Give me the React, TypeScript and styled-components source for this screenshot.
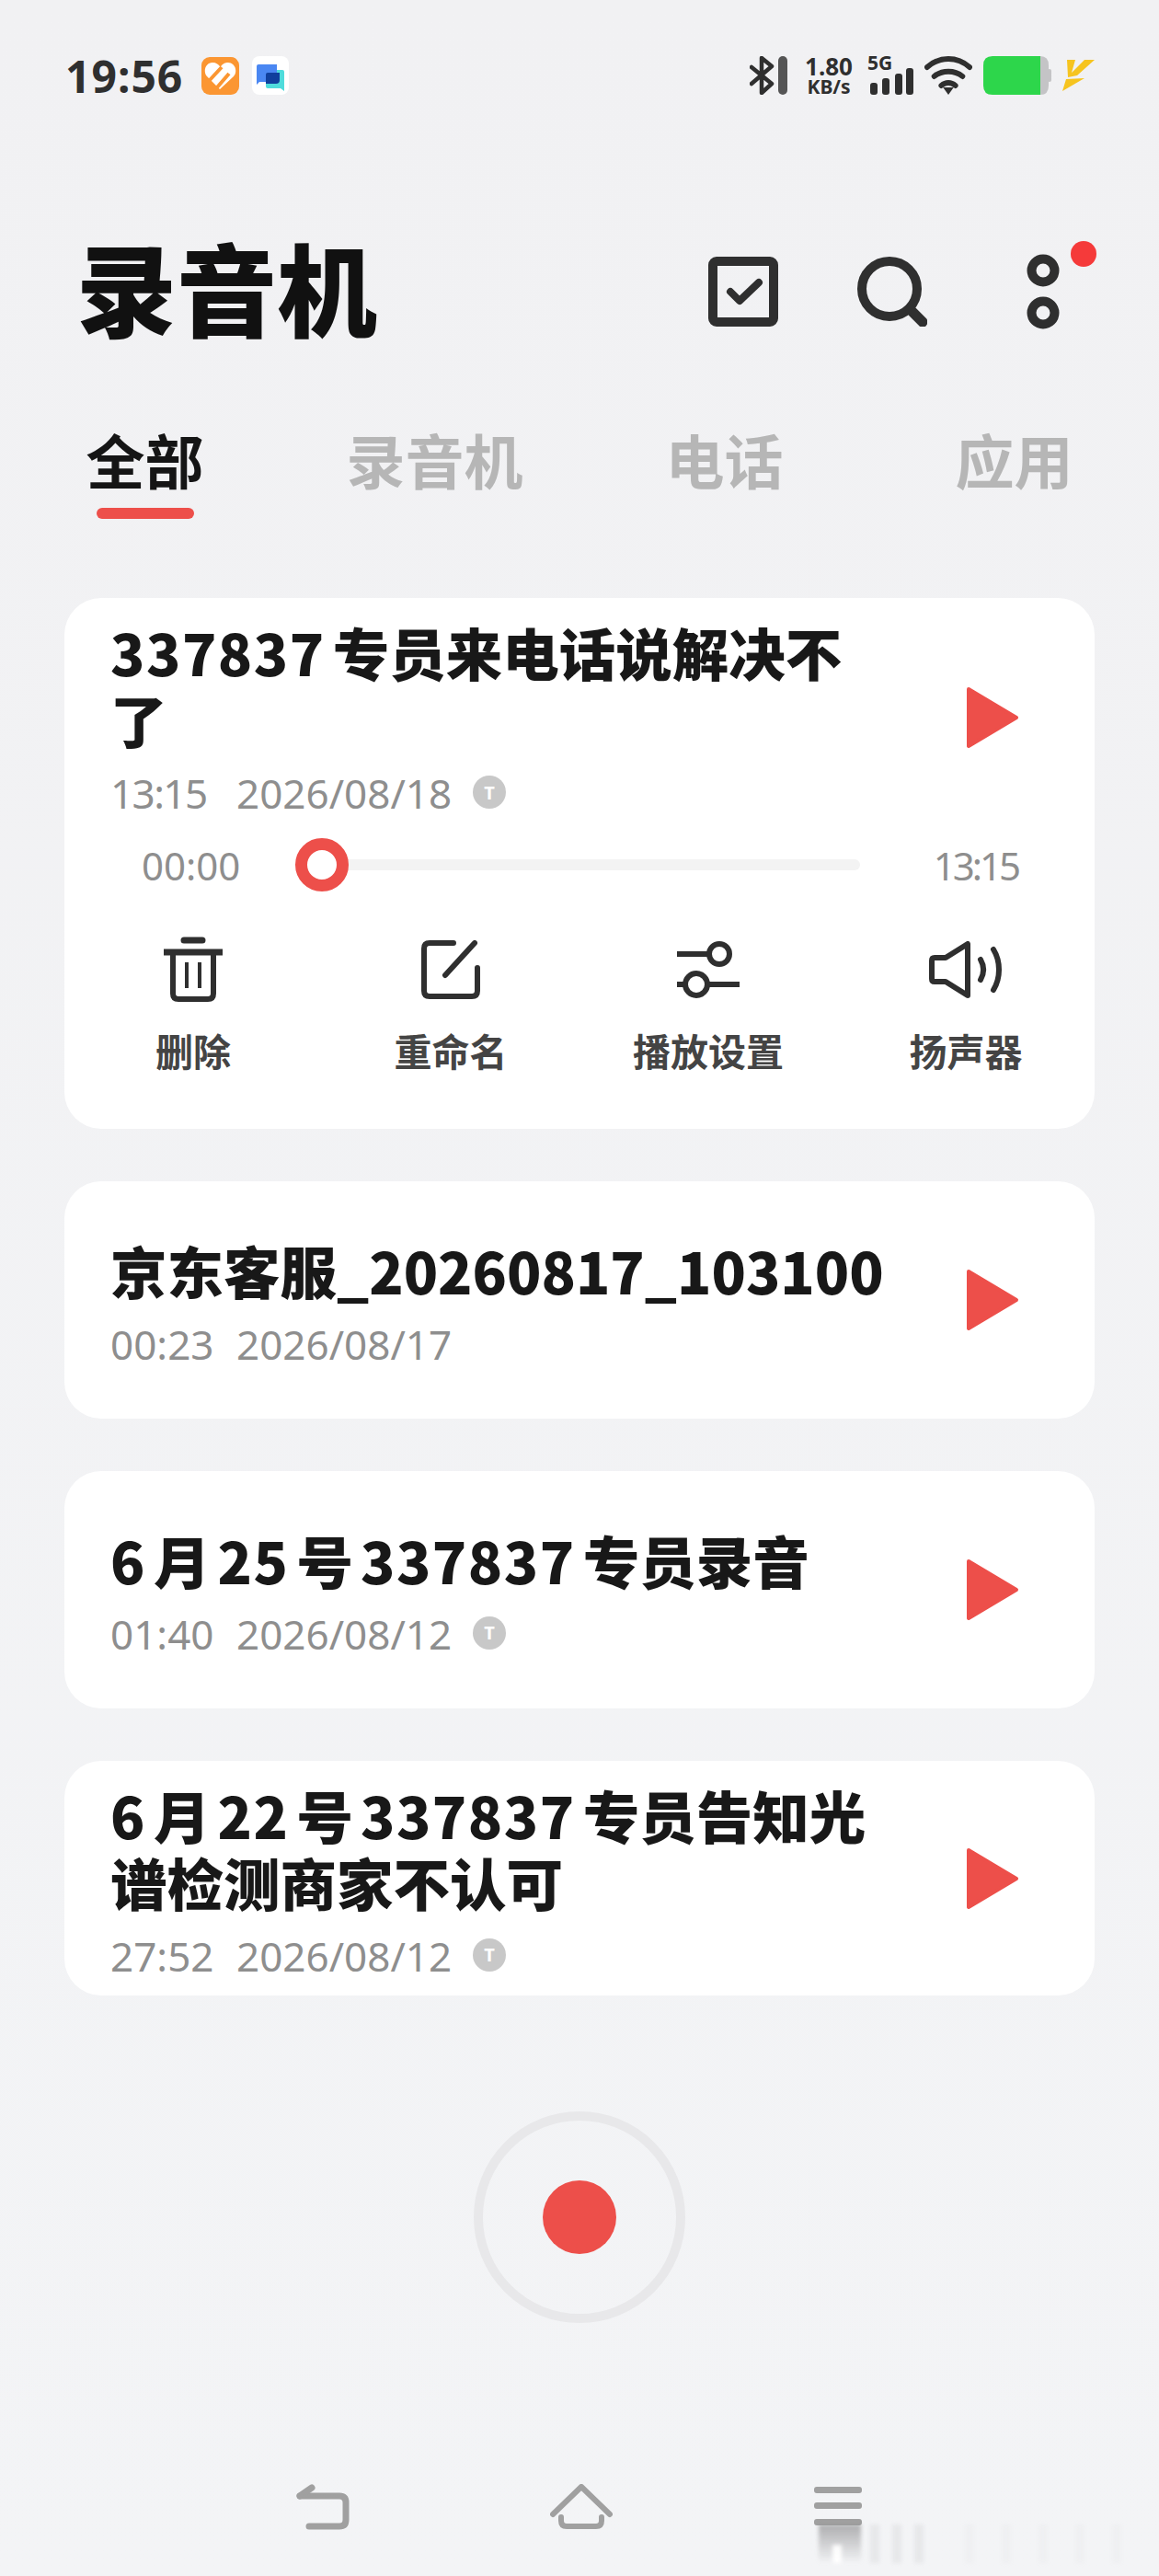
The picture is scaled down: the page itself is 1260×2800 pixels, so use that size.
import React from "react"
import styled, { createGlobalStyle } from "styled-components"

const CJK = `"Noto Sans CJK SC", "Noto Sans", sans-serif`
const LATIN = `"Noto Sans", "Noto Sans CJK SC", sans-serif`
const INK = "#2f2f2f"
const RED = "#ed4f4a"

const GlobalStyle = createGlobalStyle`
	html, body {
		margin: 0;
		padding: 0;
		background: #f1f2f4;
	}
`

const Screen = styled.div`
	position: relative;
	width: 1260px;
	height: 2800px;
	overflow: hidden;
	background: linear-gradient(#f1f1f3, #f3f4f6);
	font-family: ${CJK};
`

const StatusBar = styled.div`
	display: flex;
	align-items: center;
	justify-content: space-between;
	height: 164px;
	padding: 0 70px 0 71px;
`

const StatusGroup = styled.div`
	display: flex;
	align-items: center;
	gap: ${props => props.$gap}px;
`

const Clock = styled.span`
	font-family: ${LATIN};
	font-size: 48px;
	font-weight: 700;
	color: ${INK};
	margin-right: 6px;
	letter-spacing: 1px;
`

const Speed = styled.div`
	display: flex;
	flex-direction: column;
	align-items: center;
	font-family: ${LATIN};
	font-weight: 700;
	color: ${INK};
	margin: 0 0 0 6px;
`

const SpeedValue = styled.span`
	font-size: 26px;
	line-height: 24px;
`

const SpeedUnit = styled.span`
	font-size: 21px;
	line-height: 20px;
`

const Signal = styled.div`
	position: relative;
	width: 50px;
	height: 42px;
	margin-left: 4px;
`

const SignalLabel = styled.span`
	position: absolute;
	left: 0;
	top: -5px;
	font-family: ${LATIN};
	font-size: 21px;
	line-height: 24px;
	font-weight: 700;
	color: ${INK};
`

const Header = styled.div`
	display: flex;
	align-items: center;
	height: 108px;
	margin-top: 100px;
	padding: 0 108px 0 83px;
`

const Title = styled.h1`
	flex: 1;
	margin: -14px 0 0;
	font-size: 109px;
	line-height: 108px;
	font-weight: 900;
	color: #111;
`

const HeaderIcons = styled.div`
	position: relative;
	display: flex;
	align-items: center;
	margin-top: -2px;
	gap: 86px;
`

const Rings = styled.svg`
	margin-left: 22px;
`

const Dot = styled.span`
	position: absolute;
	right: -40px;
	top: -14px;
	width: 28px;
	height: 28px;
	border-radius: 50%;
	background: #f53a3a;
`

const Tabs = styled.div`
	display: grid;
	grid-template-columns: repeat(4, 1fr);
	margin-top: 86px;
`

const Tab = styled.div`
	position: relative;
	text-align: center;
	font-size: 64px;
	line-height: 80px;
	font-weight: 700;
	color: ${props => (props.$active ? "#151515" : "#b6b6b6")};
`

const TabBar = styled.span`
	position: absolute;
	left: 50%;
	bottom: -26px;
	width: 106px;
	height: 12px;
	margin-left: -53px;
	border-radius: 6px;
	background: ${RED};
`

const List = styled.div`
	display: flex;
	flex-direction: column;
	gap: 57px;
	margin: 112px 70px 0;
`

const Card = styled.div`
	background: #fff;
	border-radius: 40px;
	overflow: hidden;
`

const CardRow = styled.div`
	display: flex;
	align-items: center;
	justify-content: space-between;
	height: ${props => props.$height}px;
	padding: 0 82px 0 50px;
`

const Info = styled.div`
	width: 852px;
	padding-top: ${props => props.$top}px;
`

const RecordingTitle = styled.div`
	margin-top: -4px;
	font-size: 61.5px;
	line-height: 73px;
	font-weight: 900;
	color: #181818;
`

const Num = styled.span`
	letter-spacing: ${props => (props.$flush ? 0 : 1.5)}px;
	margin: 0 ${props => (props.$flush ? 0 : 8)}px;
	&:first-child {
		margin-left: 0;
	}
`

const Meta = styled.div`
	display: flex;
	align-items: center;
	height: 60px;
	margin-top: 14px;
	font-family: ${LATIN};
	font-size: 44px;
	color: #8e8e8e;
`

const MetaTime = styled.span`
	width: 137px;
	letter-spacing: ${props => (props.$tight ? -1.6 : 0)}px;
`

const Badge = styled.span`
	display: flex;
	align-items: center;
	justify-content: center;
	width: 36px;
	height: 36px;
	margin-left: 23px;
	margin-top: -2px;
	border-radius: 50%;
	background: #c8c8c8;
	color: #fff;
	font-size: 20px;
	font-weight: 700;
`

const Slider = styled.div`
	display: flex;
	align-items: center;
	height: 60px;
	padding: 0 83px 0 84px;
	font-family: ${LATIN};
	font-size: 42px;
	color: #8e8e8e;
`

const SliderTime = styled.span`
	width: 196px;
`

const Track = styled.div`
	position: relative;
	width: 585px;
	height: 12px;
	border-radius: 6px;
	background: #f3f3f3;
`

const Thumb = styled.span`
	position: absolute;
	left: -29px;
	top: -23px;
	box-sizing: border-box;
	width: 58px;
	height: 58px;
	border: 13px solid ${RED};
	border-radius: 50%;
	background: #fff;
`

const SliderEnd = styled.span`
	margin-left: auto;
	letter-spacing: -3px;
`

const Actions = styled.div`
	display: grid;
	grid-template-columns: repeat(4, 1fr);
	margin-top: 48px;
	padding-bottom: 61px;
`

const Action = styled.div`
	display: flex;
	flex-direction: column;
	align-items: center;
`

const ActionLabel = styled.span`
	font-size: 41px;
	line-height: 50px;
	font-weight: 700;
	color: #444;
`

const ActionIcon = styled.div`
	display: flex;
	align-items: center;
	justify-content: center;
	height: 72px;
	margin-bottom: 26px;
`

const RecordRing = styled.div`
	display: flex;
	align-items: center;
	justify-content: center;
	box-sizing: border-box;
	width: 230px;
	height: 230px;
	margin: 126px auto 0;
	border: 10px solid #e8e8ea;
	border-radius: 50%;
`

const RecordDot = styled.div`
	width: 80px;
	height: 80px;
	border-radius: 50%;
	background: ${RED};
`

const NavBar = styled.div`
	display: flex;
	align-items: center;
	justify-content: center;
	gap: 218px;
	margin-top: 175px;
`

// the faint smear under the menu button
const Smudge = styled.div`
	position: absolute;
	left: 890px;
	top: 2744px;
	width: 350px;
	height: 42px;
	filter: blur(2px);
	background:
		linear-gradient(#fbfbfb, #fff) 15px 22px / 10px 20px no-repeat,
		linear-gradient(rgba(150, 150, 152, 0.75), rgba(150, 150, 152, 0)) 0 0 / 46px 100% no-repeat,
		repeating-linear-gradient(90deg, rgba(205, 205, 207, 0.3) 0 10px, transparent 10px 24px) 56px 0 / 70px 100% no-repeat,
		repeating-linear-gradient(90deg, rgba(225, 225, 227, 0.22) 0 8px, transparent 8px 40px) 160px 0 / 190px 100% no-repeat;
`

const PlayIcon = () => (
	<svg width="58" height="68" viewBox="0 0 58 68">
		<path d="M3 3 L55 34 L3 65 Z" fill={RED} stroke={RED} strokeWidth="4" strokeLinejoin="round" />
	</svg>
)

const Recording = ({ height, top, title, time, tight, date, children }: any) => (
	<CardRow $height={height}>
		<Info $top={top}>
			<RecordingTitle>{title}</RecordingTitle>
			<Meta>
				<MetaTime $tight={tight}>{time}</MetaTime>
				{date}
				{children}
			</Meta>
		</Info>
		<PlayIcon />
	</CardRow>
)

const HealthIcon = () => (
	<svg width="41" height="41" viewBox="0 0 41 41">
		<rect width="41" height="41" rx="9" fill="#fb9632" />
		<path d="M20 35 L6 21 C1 15 5 6 12 6 C16 6 19 8 20.5 11 C23 7 26 6 29 6 C36 6 40 15 35 21 Z" fill="#fff" />
		<path d="M9 25 L22 11 M17 33 L30 18" stroke="#fb9632" strokeWidth="4" />
	</svg>
)

const ChatIcon = () => (
	<svg width="40" height="42" viewBox="0 0 40 42">
		<rect width="40" height="42" rx="8" fill="#fff" />
		<path d="M15 15 H33 Q35 15 35 17 V38 L31 35 H17 Q15 35 15 33 Z" fill="#4fdcdc" />
		<path d="M7 9 H27 V28 H8 L5 31 V11 Q5 9 7 9 Z" fill="#4a87f2" />
		<path d="M17 18 H30 V26 Q30 30 26 30 H15 V20 Q15 18 17 18 Z" fill="#103f9c" />
	</svg>
)

const App = (): JSX.Element => (
	<Screen>
		<GlobalStyle />
		<StatusBar>
			<StatusGroup $gap={14}>
				<Clock>19:56</Clock>
				<HealthIcon />
				<ChatIcon />
			</StatusGroup>
			<StatusGroup $gap={12}>
				<svg width="42" height="42" viewBox="0 0 42 42">
					<path d="M2 12 L24 30 L13 40 V2 L24 11 L2 30" fill="none" stroke={INK} strokeWidth="4.5" strokeLinejoin="round" strokeLinecap="round" />
					<rect x="31" y="0" width="10" height="42" rx="5" fill="#555" />
				</svg>
				<Speed>
					<SpeedValue>1.80</SpeedValue>
					<SpeedUnit>KB/s</SpeedUnit>
				</Speed>
				<Signal>
					<SignalLabel>5G</SignalLabel>
					<svg width="50" height="42" viewBox="0 0 50 42">
						<rect x="3" y="29" width="8" height="13" rx="3" fill={INK} />
						<rect x="16" y="24" width="8" height="18" rx="3" fill={INK} />
						<rect x="30" y="19" width="8" height="23" rx="3" fill={INK} />
						<rect x="42" y="13" width="8" height="29" rx="3" fill={INK} />
					</svg>
				</Signal>
				<svg width="52" height="42" viewBox="0 0 54 42" preserveAspectRatio="none">
					<path d="M3 12 C17 0 37 0 51 12 M11 22 C20 15 34 15 43 22 M19 32 C24 28 30 28 35 32" fill="none" stroke={INK} strokeWidth="6" strokeLinecap="round" />
					<path d="M21 34 H33 L27 42 Z" fill={INK} />
				</svg>
				<svg width="74" height="42" viewBox="0 0 74 42">
					<path d="M60 0 H62 Q71 0 71 10 V32 Q71 42 62 42 H60 Z" fill="#c4c4c6" />
					<rect x="70" y="14" width="4" height="14" rx="2" fill="#c4c4c6" />
					<path d="M10 0 H62 V42 H10 Q0 42 0 32 V10 Q0 0 10 0 Z" fill="#2dd64b" />
				</svg>
				<svg width="35" height="34" viewBox="0 0 35 34">
					<path d="M5 0 H14 L10 14 L24 0 H35 L16 17 L6 19 Z M24 20 L0 34 L4 21 Z" fill="#f6c41f" />
				</svg>
			</StatusGroup>
		</StatusBar>

		<Header>
			<Title>录音机</Title>
			<HeaderIcons>
				<svg width="76" height="76" viewBox="0 0 76 76">
					<rect x="5" y="5" width="66" height="66" rx="4" fill="none" stroke={INK} strokeWidth="10" />
					<path d="M24 38 L34 48 L55 28" fill="none" stroke={INK} strokeWidth="8" strokeLinecap="round" strokeLinejoin="round" />
				</svg>
				<svg width="76" height="76" viewBox="0 0 76 76">
					<circle cx="35" cy="35" r="30" fill="none" stroke={INK} strokeWidth="10" />
					<path d="M58 58 L71 71" stroke={INK} strokeWidth="11" strokeLinecap="round" />
				</svg>
				<Rings width="36" height="82" viewBox="0 0 36 82">
					<circle cx="18" cy="18" r="12.5" fill="none" stroke={INK} strokeWidth="10" />
					<circle cx="18" cy="64" r="12.5" fill="none" stroke={INK} strokeWidth="10" />
				</Rings>
				<Dot />
			</HeaderIcons>
		</Header>

		<Tabs>
			<Tab $active>全部<TabBar /></Tab>
			<Tab>录音机</Tab>
			<Tab>电话</Tab>
			<Tab>应用</Tab>
		</Tabs>

		<List>
			<Card>
				<Recording height={260} top={8} tight title={<><Num>337837</Num>专员来电话说解决不了</>} time="13:15" date="2026/08/18">
					<Badge>T</Badge>
				</Recording>
				<Slider>
					<SliderTime>00:00</SliderTime>
					<Track><Thumb /></Track>
					<SliderEnd>13:15</SliderEnd>
				</Slider>
				<Actions>
					<Action>
						<ActionIcon>
							<svg width="64" height="72" viewBox="0 0 64 72">
								<path d="M22 4 H42 M1 17 H63" stroke={INK} strokeWidth="7" strokeLinecap="round" />
								<path d="M10 17 V62 Q10 68 16 68 H48 Q54 68 54 62 V17" fill="none" stroke={INK} strokeWidth="6" />
								<path d="M25 28 V56 M39 28 V56" stroke={INK} strokeWidth="4" />
							</svg>
						</ActionIcon>
						<ActionLabel>删除</ActionLabel>
					</Action>
					<Action>
						<ActionIcon>
							<svg width="64" height="64" viewBox="0 0 64 64">
								<path d="M35 3 H9 Q3 3 3 9 V55 Q3 61 9 61 H55 Q61 61 61 55 V30" fill="none" stroke={INK} strokeWidth="6" strokeLinecap="round" />
								<path d="M26 38 L58 3" stroke={INK} strokeWidth="6" strokeLinecap="round" />
							</svg>
						</ActionIcon>
						<ActionLabel>重命名</ActionLabel>
					</Action>
					<Action>
						<ActionIcon>
							<svg width="70" height="64" viewBox="0 0 70 64">
								<path d="M1 15 H36 M1 48 H10 M34 48 H69" stroke={INK} strokeWidth="6" />
								<circle cx="47" cy="15" r="11" fill="none" stroke={INK} strokeWidth="6" />
								<circle cx="22" cy="48" r="12" fill="none" stroke={INK} strokeWidth="6" />
							</svg>
						</ActionIcon>
						<ActionLabel>播放设置</ActionLabel>
					</Action>
					<Action>
						<ActionIcon>
							<svg width="80" height="62" viewBox="0 0 80 62">
								<path d="M3 21 Q3 18 6 18 H18 L42 3 V59 L18 44 H6 Q3 44 3 41 Z" fill="none" stroke={INK} strokeWidth="6" strokeLinejoin="round" />
								<path d="M56 20 C60 27 60 35 56 42 M70 9 C78 22 78 40 70 53" fill="none" stroke={INK} strokeWidth="6" strokeLinecap="round" />
							</svg>
						</ActionIcon>
						<ActionLabel>扬声器</ActionLabel>
					</Action>
				</Actions>
			</Card>
			<Card>
				<Recording height={258} top={12} title={<>京东客服<Num $flush>_20260817_103100</Num></>} time="00:23" date="2026/08/17" />
			</Card>
			<Card>
				<Recording height={258} top={12} title={<><Num>6</Num>月<Num>25</Num>号<Num>337837</Num>专员录音</>} time="01:40" date="2026/08/12">
					<Badge>T</Badge>
				</Recording>
			</Card>
			<Card>
				<Recording height={255} top={12} title={<><Num>6</Num>月<Num>22</Num>号<Num>337837</Num>专员告知光谱检测商家不认可</>} time="27:52" date="2026/08/12">
					<Badge>T</Badge>
				</Recording>
			</Card>
		</List>

		<RecordRing>
			<RecordDot />
		</RecordRing>

		<NavBar>
			<svg width="58" height="50" viewBox="0 0 58 50" fill="none" stroke="#a0a0a0" strokeWidth="7" strokeLinecap="round" strokeLinejoin="round">
				<path d="M4 13 H47 Q54 13 54 20 V39 Q54 46 47 46 H14" />
				<path d="M4 13 L17 4" />
			</svg>
			<svg width="68" height="50" viewBox="0 0 68 50" fill="none" stroke="#a0a0a0" strokeWidth="6" strokeLinecap="round" strokeLinejoin="round">
				<path d="M3 33 L34 3 L65 33" />
				<path d="M12 36 V40 Q12 46 18 46 H50 Q56 46 56 40 V36" />
			</svg>
			<svg width="54" height="44" viewBox="0 0 54 44" fill="#a0a0a0">
				<rect x="1" y="0" width="52" height="7" rx="3" />
				<rect x="1" y="17" width="52" height="7" rx="3" />
				<rect x="1" y="35" width="52" height="7" rx="3" />
			</svg>
		</NavBar>
		<Smudge />
	</Screen>
)

export default App
